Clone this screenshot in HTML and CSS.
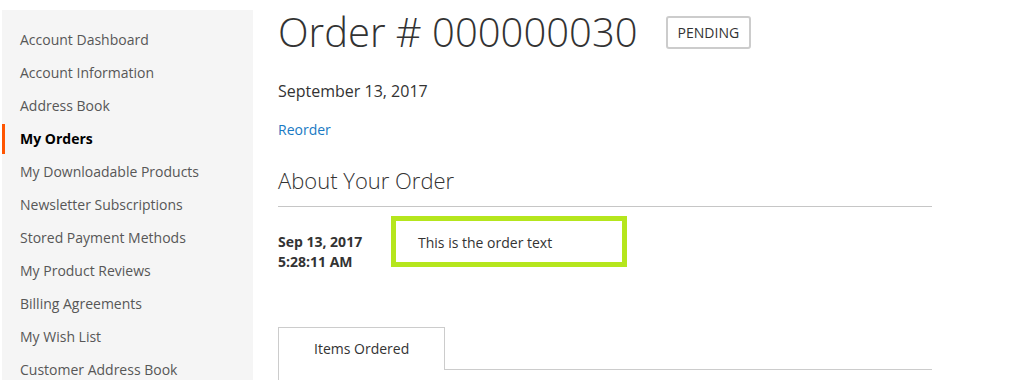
FILE: index.html
```html
<!DOCTYPE html>
<html lang="en">
<head>
<meta charset="utf-8">
<title>Order # 000000030</title>
<link rel="stylesheet" href="styles.css">
</head>
<body>
<div class="page">
  <aside class="sidebar">
    <ul class="nav">
      <li class="item"><a href="#">Account Dashboard</a></li>
      <li class="item"><a href="#">Account Information</a></li>
      <li class="item"><a href="#">Address Book</a></li>
      <li class="item current"><strong>My Orders</strong></li>
      <li class="item"><a href="#">My Downloadable Products</a></li>
      <li class="item"><a href="#">Newsletter Subscriptions</a></li>
      <li class="item"><a href="#">Stored Payment Methods</a></li>
      <li class="item"><a href="#">My Product Reviews</a></li>
      <li class="item"><a href="#">Billing Agreements</a></li>
      <li class="item"><a href="#">My Wish List</a></li>
      <li class="item"><a href="#">Customer Address Book</a></li>
    </ul>
  </aside>
  <main class="main">
    <div class="title-row">
      <h1 class="page-title">Order # 000000030</h1>
      <span class="order-status">Pending</span>
    </div>
    <div class="order-date">September 13, 2017</div>
    <div class="actions"><a class="reorder" href="#">Reorder</a></div>
    <div class="block-title">About Your Order</div>
    <div class="comment-row">
      <div class="comment-date">Sep 13, 2017<br>5:28:11 AM</div>
      <div class="comment-text">This is the order text</div>
    </div>
    <div class="tabs">
      <div class="tab">Items Ordered</div>
    </div>
    <div class="items-box"></div>
  </main>
</div>
</body>
</html>
```

FILE: styles.css
```css
html, body {
  margin: 0;
  padding: 0;
  background: #fff;
}
body {
  font-family: "Open Sans", "Liberation Sans", sans-serif;
  font-size: 14px;
  line-height: 20px;
  color: #333;
}
.page {
  display: flex;
  align-items: flex-start;
  padding: 10px 0 0 2px;
}
.sidebar {
  width: 251px;
  flex: none;
  background: #f5f5f5;
}
.nav {
  list-style: none;
  margin: 0;
  padding: 15px 0;
}
.nav .item {
  margin-top: 3px;
}
.nav .item:first-child {
  margin-top: 0;
}
.nav .item a,
.nav .item strong {
  display: block;
  padding: 5px 18px 5px 15px;
  border-left: 3px solid transparent;
  color: #575757;
  text-decoration: none;
  line-height: 20px;
}
.nav .item.current strong {
  border-left-color: #ff5501;
  color: #000;
  font-weight: 700;
}
.main {
  margin-left: 25px;
  width: 654px;
  flex: none;
}
.title-row {
  display: flex;
  align-items: flex-start;
  gap: 28px;
}
.page-title {
  margin: 0;
  font-size: 40px;
  line-height: 44px;
  font-weight: 300;
  color: #333;
}
.order-status {
  margin-top: 6px;
  border: 2px solid #ccc;
  border-radius: 3px;
  padding: 5px 10px;
  font-size: 14px;
  line-height: 19px;
  text-transform: uppercase;
  color: #333;
}
.order-date {
  margin-top: 26px;
  font-size: 16px;
  line-height: 22px;
}
.actions {
  margin-top: 18px;
}
.reorder {
  color: #1979c3;
  text-decoration: none;
}
.block-title {
  margin-top: 26px;
  padding-bottom: 12px;
  border-bottom: 1px solid #c6c6c6;
  font-size: 22px;
  line-height: 28px;
  font-weight: 300;
}
.comment-row {
  display: grid;
  grid-template-columns: 113px 236px;
  align-items: start;
  margin-top: 9px;
}
.comment-date {
  margin-top: 16px;
  font-weight: 700;
}
.comment-text {
  border: 5px solid #b5e61d;
  padding: 12px 22px 9px;
}
.tabs {
  display: flex;
  margin-top: 55px;
}
.tab {
  position: relative;
  z-index: 1;
  margin-bottom: -1px;
  padding: 11px 35px;
  border: 1px solid #ccc;
  border-bottom: 0;
  background: #fff;
  color: #333;
}
.items-box {
  height: 120px;
  border: 1px solid #ccc;
  border-right: 0;
}
```
